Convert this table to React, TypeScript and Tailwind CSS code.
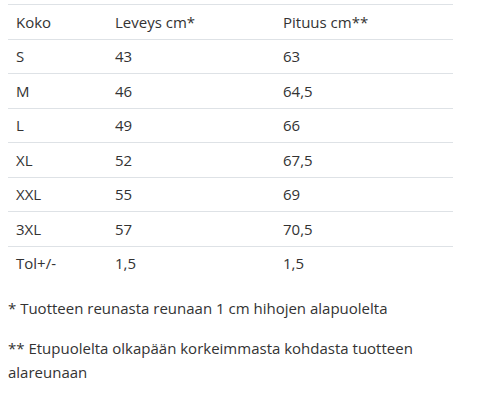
import React from "react";

const rows: [string, string, string][] = [
  ["S", "43", "63"],
  ["M", "46", "64,5"],
  ["L", "49", "66"],
  ["XL", "52", "67,5"],
  ["XXL", "55", "69"],
  ["3XL", "57", "70,5"],
  ["Tol+/-", "1,5", "1,5"],
];

export default function App() {
  return (
    <div className="bg-white w-[502px] h-[405px] px-2 pt-1 text-[15px] text-[#333333]" style={{ fontFamily: '"Open Sans", sans-serif' }}>
      <table className="w-[445px] border-collapse">
        <tbody>
          <tr className="border-t border-[#dee2e6]">
            <td className="w-[99px] px-2 py-[5.5px] leading-[22.5px]">Koko</td>
            <td className="w-[168px] px-2 py-[5.5px] leading-[22.5px]">Leveys cm*</td>
            <td className="px-2 py-[5.5px] leading-[22.5px]">Pituus cm**</td>
          </tr>
          {rows.map((r) => (
            <tr key={r[0]} className="border-t border-[#dee2e6]">
              <td className="px-2 py-[5.5px] leading-[22.5px]">{r[0]}</td>
              <td className="px-2 py-[5.5px] leading-[22.5px]">{r[1]}</td>
              <td className="px-2 py-[5.5px] leading-[22.5px]">{r[2]}</td>
            </tr>
          ))}
        </tbody>
      </table>
      <p className="mt-4 leading-[24px]">* Tuotteen reunasta reunaan 1 cm hihojen alapuolelta</p>
      <p className="mt-4 leading-[24px] w-[445px]">** Etupuolelta olkapään korkeimmasta kohdasta tuotteen alareunaan</p>
    </div>
  );
}
